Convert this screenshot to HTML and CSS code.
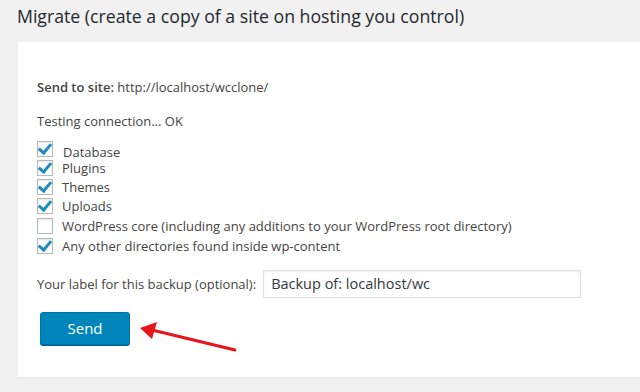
FILE: index.html
```html
<!DOCTYPE html>
<html>
<head>
<meta charset="utf-8">
<link rel="stylesheet" href="styles.css">
</head>
<body>
<div class="page">
  <h2 class="title">Migrate (create a copy of a site on hosting you control)</h2>
  <div class="panel">
    <p class="line site"><strong>Send to site:</strong> http://localhost/wcclone/</p>
    <p class="line test">Testing connection... OK</p>
    <div class="checks">
      <label class="check first"><span class="box on"></span><span class="txt">Database</span></label>
      <label class="check tight"><span class="box on"></span><span class="txt">Plugins</span></label>
      <label class="check"><span class="box on"></span><span class="txt">Themes</span></label>
      <label class="check"><span class="box on"></span><span class="txt">Uploads</span></label>
      <label class="check"><span class="box"></span><span class="txt">WordPress core (including any additions to your WordPress root directory)</span></label>
      <label class="check"><span class="box on"></span><span class="txt">Any other directories found inside wp-content</span></label>
    </div>
    <div class="labelrow">
      <span class="lbl">Your label for this backup (optional):</span>
      <span class="input">Backup of: localhost/wc</span>
    </div>
    <div class="btnrow">
      <span class="btn">Send</span>
      <svg class="arrow" width="110" height="30" viewBox="0 0 110 30">
        <line x1="97" y1="25" x2="14" y2="5" stroke="#e8141b" stroke-width="3" stroke-linecap="round"/>
        <polygon points="2,3 19,-3 14,14" fill="#e8141b"/>
      </svg>
    </div>
  </div>
</div>
</body>
</html>
```

FILE: styles.css
```css
html, body { margin: 0; padding: 0; }
body {
  width: 640px; height: 392px; overflow: hidden;
  background: #f1f1f1;
  font-family: "Open Sans", "Noto Sans", sans-serif;
  color: #444;
}
.page { padding: 0 0 0 18px; }
.title {
  margin: 0; padding: 4px 0 0 0;
  font-weight: 400; font-size: 17.7px; line-height: 24px;
  color: #23282d; height: 38px; box-sizing: border-box;
  margin-left: -1px;
}
.panel {
  background: #fff;
  margin-top: 4px;
  height: 335px;
  padding: 35px 0 0 19px;
  box-sizing: border-box;
  font-size: 13px;
  box-shadow: 0 1px 1px rgba(0,0,0,0.04);
}
.line { margin: 0; line-height: 20px; }
.line strong { font-weight: 600; }
.test { margin-top: 14px; }
.checks { margin-top: 10px; display: flex; flex-direction: column; }
.check { display: flex; align-items: center; height: 19.6px; }
.check.first { height: 18px; align-items: flex-start; }
.check.first .txt { padding-top: 5px; line-height: 13px; margin-left: 10px; }
.check.tight { height: 18px; margin-top: 0; }
.box {
  width: 14px; height: 14px;
  border: 1px solid #b4b9be; background: #fff;
  box-shadow: inset 0 1px 2px rgba(0,0,0,0.1);
  position: relative; flex: none;
}
.box.on::after {
  content: ""; position: absolute;
  left: 3px; top: -1px; width: 5px; height: 10px;
  border-right: 3px solid #1e8cbe; border-bottom: 3px solid #1e8cbe;
  transform: rotate(40deg);
}
.txt { margin-left: 9px; line-height: 16px; }
.labelrow { display: flex; align-items: center; margin-top: 15px; }
.lbl { margin-right: 7px; }
.input {
  width: 318px; height: 28px; box-sizing: border-box;
  border: 1px solid #ddd; box-shadow: inset 0 1px 2px rgba(0,0,0,0.07);
  font-size: 14.5px; padding: 3px 0 0 7px; color: #32373c; line-height: 20px;
}
.btnrow { display: flex; align-items: flex-start; margin-top: 14px; margin-left: 3px; }
.btn {
  width: 90px; height: 33px; box-sizing: border-box;
  background: #0085ba; border: 1px solid #0073aa; border-radius: 3px;
  color: #fff; font-size: 15px; text-align: center; line-height: 30px;
  box-shadow: 0 1px 0 #006799;
}
.arrow { margin-left: 8px; margin-top: 13px; overflow: visible; }
```
